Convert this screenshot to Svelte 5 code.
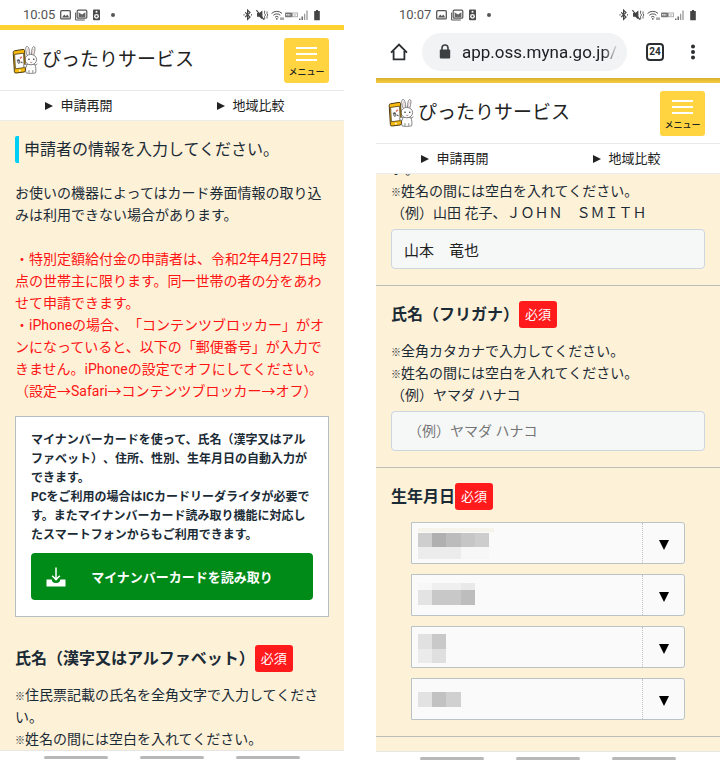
<script lang="ts">
  interface Block {
    x: number,
    y: number,
    w: number,
    h: number,
    c: string
  }

  interface BirthField {
    id: string,
    name: string,
    blocks: Array<Block>
  }

  let fullName = $state('山本　竜也');
  let kana = $state('');
  let address = $state('app.oss.myna.go.jp/A');

  // masked values, drawn over each drop-down
  const birth: Array<BirthField> = [
    {
      id: 'era',
      name: '元号',
      blocks: [
        { x: 0, y: 5, w: 76, h: 4, c: '#f6f4ea' },
        { x: 0, y: 10, w: 14, h: 14, c: '#cecece' },
        { x: 14, y: 10, w: 14, h: 14, c: '#b0b0b0' },
        { x: 28, y: 10, w: 15, h: 14, c: '#bcbcbc' },
        { x: 43, y: 10, w: 14, h: 14, c: '#c6c6c6' },
        { x: 57, y: 10, w: 14, h: 14, c: '#cdcdcd' },
        { x: 0, y: 24, w: 43, h: 12, c: '#ececec' },
        { x: 43, y: 24, w: 28, h: 12, c: '#f7f7f7' }
      ]
    },
    {
      id: 'year',
      name: '年',
      blocks: [
        { x: 0, y: 8, w: 14, h: 7, c: '#f7f7f7' },
        { x: 14, y: 8, w: 29, h: 7, c: '#efefef' },
        { x: 43, y: 8, w: 14, h: 7, c: '#e9e9e9' },
        { x: 0, y: 15, w: 14, h: 15, c: '#e3e3e3' },
        { x: 14, y: 15, w: 29, h: 15, c: '#c8c8c8' },
        { x: 43, y: 15, w: 14, h: 15, c: '#bdbdbd' }
      ]
    },
    {
      id: 'month',
      name: '月',
      blocks: [
        { x: 0, y: 7, w: 14, h: 15, c: '#e1e1e1' },
        { x: 14, y: 7, w: 14, h: 15, c: '#c9c9c9' },
        { x: 0, y: 22, w: 14, h: 14, c: '#ebebeb' },
        { x: 14, y: 22, w: 14, h: 14, c: '#dfdfdf' }
      ]
    },
    {
      id: 'day',
      name: '日',
      blocks: [
        { x: 0, y: 13, w: 14, h: 15, c: '#e2e2e2' },
        { x: 14, y: 13, w: 14, h: 15, c: '#c2c2c2' },
        { x: 28, y: 13, w: 15, h: 15, c: '#d0d0d0' }
      ]
    }
  ];
</script>

{#snippet status(time: string)}
  <div class="status">
    <span class="time">{time}</span>
    <svg class="notices" width="56" height="12" viewBox="0 0 56 12" aria-hidden="true">
      <rect x="0.7" y="1.7" width="9.6" height="8.2" rx="1" fill="none" stroke="#555" stroke-width="1.3" />
      <path d="M2 8.6 4.3 5.6 5.8 7.2 7.3 5.4 9.2 8.6z" fill="#555" />
      <path d="M15.6 3.6v7.4h9.2" fill="none" stroke="#555" stroke-width="1" />
      <rect x="17.2" y="1.2" width="9.6" height="8" rx="1" fill="none" stroke="#555" stroke-width="1.2" />
      <path d="M18.6 3.2 22 5.4 25.4 3.2V8.2H18.6z" fill="#666" />
      <rect x="33" y="0.6" width="7" height="10.6" rx="1" fill="#4c4c4c" />
      <circle cx="36.5" cy="7.3" r="2.4" fill="#fff" />
      <circle cx="36.5" cy="7.3" r="1.1" fill="#4c4c4c" />
      <circle cx="36.5" cy="2.7" r="1" fill="#fff" />
      <circle cx="53" cy="6" r="2" fill="#555" />
    </svg>
    <svg class="signals" width="80" height="12" viewBox="0 0 80 12" aria-hidden="true">
      <path d="M2.2 3.4 7 8 4.6 10.4V1.2L7 3.6 2.2 8" fill="none" stroke="#444" stroke-width="1.2" />
      <path d="M0.5 5.8h1M8 5.8h1" stroke="#444" stroke-width="1.2" />
      <path d="M14 4h2.2L19.4 1.4v9L16.2 7.8H14z" fill="#444" />
      <path d="M13.4 1.2 21 10.6" stroke="#444" stroke-width="1.1" />
      <path d="M21.6 1.6v3l1 1.4-1 1.4v3M24 2.4v2l.8 1.6-.8 1.6v2" fill="none" stroke="#555" stroke-width="0.9" />
      <path d="M28.6 4.4a7.6 7.6 0 0 1 10.4 0M30.3 6.3a5 5 0 0 1 7 0M32 8.2a2.6 2.6 0 0 1 3.6 0" fill="none" stroke="#555" stroke-width="1" />
      <circle cx="33.8" cy="9.8" r="0.9" fill="#555" />
      <path d="M38 8.4v2.6M40 8.4v2.6" stroke="#555" stroke-width="1" />
      <rect x="42" y="3.6" width="7" height="4.6" rx="0.8" fill="#777" />
      <path d="M43.4 6.8V5l1 1.2 1-1.2v1.8M46.8 5v1.8" fill="none" stroke="#fff" stroke-width="0.6" />
      <rect x="49.4" y="4" width="5" height="3.8" fill="none" stroke="#999" stroke-width="0.8" />
      <path d="M50.6 6h2.6" stroke="#999" stroke-width="0.8" />
      <path d="M56.8 9.4V11M59.2 7.4V11" stroke="#555" stroke-width="1.3" />
      <path d="M61.6 4.8V11M64 1.4V11" stroke="#999" stroke-width="1.3" />
      <path d="M73 1h2v1h1.8v9.2h-5.6V2H73z" fill="#444" />
    </svg>
  </div>
{/snippet}

{#snippet siteHeader()}
  <header class="site-header">
    <svg width="28" height="30" viewBox="0 0 28 30" aria-hidden="true">
      <!-- rabbit -->
      <path d="M15.4 10.6C13.4 6 13 1.6 15 1.4c1.8-.2 2.6 4.4 2.8 8M19.4 9.4C19.6 5 20.4 1.2 22 1.6c1.8.5.6 5.6-.4 9" fill="#fff" stroke="#777" stroke-width="0.9" />
      <path d="M15.6 3.6l.8 5M21.3 3.8l-.8 5" stroke="#d9b9b9" stroke-width="0.9" />
      <path d="M14.4 19.4c-1 3-1 6-.4 8.4 1.8.8 7.8.8 9.6 0 .6-2.4.4-5.4-.8-8.4z" fill="#fff" stroke="#777" stroke-width="0.9" />
      <ellipse cx="18.8" cy="14.6" rx="5.8" ry="5.2" fill="#fff" stroke="#777" stroke-width="0.9" />
      <circle cx="17" cy="14.2" r="0.8" fill="#333" />
      <circle cx="21.8" cy="14.2" r="0.8" fill="#333" />
      <path d="M18.3 17.2q1 .8 2 0" fill="none" stroke="#a55" stroke-width="0.8" />
      <path d="M22.8 20.4l2.6-1.6M17 27.8v-2.6M20.8 27.8v-2.6" stroke="#777" stroke-width="0.9" />
      <!-- phone -->
      <path d="M2.4 5.8 11 4.4q1.5-.2 1.6 1.2l.8 19.8q0 1.4-1.3 1.6L4 28q-1.5.1-1.6-1.2L1.2 7.4Q1.2 6 2.4 5.8z" fill="#f7bb10" stroke="#4d3a10" stroke-width="1" />
      <path d="M2.6 9.4 11.6 8.2l.6 14.4-8.8 1.2z" fill="#fff" stroke="#4d3a10" stroke-width="0.8" />
      <path d="M4.8 15.2h2.4M6.6 14.6c-1.6 2.4-.6 4 .6 3.6 1-.4.8-2-.2-3.6M8.8 17.4q1.6-1 1.4.8" fill="none" stroke="#333" stroke-width="0.9" />
      <path d="M8 13.4l1.8-1.6" stroke="#ee5b4d" stroke-width="1.4" />
      <circle cx="7.8" cy="25.6" r="0.9" fill="#fff" />
      <circle cx="13.2" cy="20.8" r="1.5" fill="#fff" stroke="#777" stroke-width="0.8" />
    </svg>
    <span class="site-name">ぴったりサービス</span>
    <button class="menu" type="button">
      <span class="menu-icon"></span>
      メニュー
    </button>
  </header>
  <nav class="site-nav">
    <a href="#resume">申請再開</a>
    <a href="#compare">地域比較</a>
  </nav>
{/snippet}

{#snippet systemKeys()}
  <footer class="keys">
    <button type="button" aria-label="履歴"></button>
    <button type="button" aria-label="ホーム"></button>
    <button type="button" aria-label="戻る"></button>
  </footer>
{/snippet}

<div class="screens">
  <section class="phone">
    {@render status('10:05')}
    <div class="accent"></div>
    {@render siteHeader()}
    <main class="content">
      <h1>申請者の情報を入力してください。</h1>
      <p>お使いの機器によってはカード券面情報の取り込みは利用できない場合があります。</p>
      <p class="notice">
        ・特別定額給付金の申請者は、令和2年4月27日時点の世帯主に限ります。同一世帯の者の分をあわせて申請できます。<br />
        ・iPhoneの場合、「コンテンツブロッカー」がオンになっていると、以下の「郵便番号」が入力できません。iPhoneの設定でオフにしてください。<br />
        （設定→Safari→コンテンツブロッカー→オフ）
      </p>
      <div class="card">
        <p>
          マイナンバーカードを使って、氏名（漢字又はアルファベット）、住所、性別、生年月日の自動入力ができます。<br />
          PCをご利用の場合はICカードリーダライタが必要です。またマイナンバーカード読み取り機能に対応したスマートフォンからもご利用できます。
        </p>
        <button class="read" type="button">
          <svg width="20" height="20" viewBox="0 0 20 20" aria-hidden="true">
            <path d="M0.5 12.5h5.3a4.2 3.6 0 0 0 8.4 0h5.3V19.5H0.5z" fill="#fff" />
            <path d="M10 0.5v12M6.2 8.8 10 12.6 13.8 8.8" fill="none" stroke="#fff" stroke-width="1.5" />
          </svg>
          <span>マイナンバーカードを読み取り</span>
        </button>
      </div>
      <h2>氏名（漢字又はアルファベット）<span class="required">必須</span></h2>
      <p class="hint">
        <span class="mark">※</span>住民票記載の氏名を全角文字で入力してください。<br />
        <span class="mark">※</span>姓名の間には空白を入れてください。
      </p>
    </main>
    {@render systemKeys()}
  </section>

  <section class="phone">
    {@render status('10:07')}
    <div class="toolbar">
      <button class="tool" type="button" aria-label="ホーム">
        <svg width="18" height="18" viewBox="0 0 18 18" aria-hidden="true">
          <path d="M1 9.6 9 1.6 17 9.6M3.6 8v8.4h10.8V8" fill="none" stroke="#2b2e31" stroke-width="1.8" />
        </svg>
      </button>
      <div class="address">
        <svg width="12" height="16" viewBox="0 0 12 16" aria-hidden="true">
          <path d="M3 7V4a3 3 0 0 1 6 0v3" fill="none" stroke="#3c4043" stroke-width="1.6" />
          <rect x="0.8" y="5.6" width="10.4" height="9" rx="1" fill="#3c4043" />
        </svg>
        <input aria-label="アドレス" bind:value={address} />
      </div>
      <button class="tool tabs" type="button">24</button>
      <button class="tool" type="button" aria-label="その他">
        <svg width="4" height="16" viewBox="0 0 4 16" aria-hidden="true">
          <circle cx="2" cy="2.4" r="2" fill="#2b2e31" />
          <circle cx="2" cy="8" r="2" fill="#2b2e31" />
          <circle cx="2" cy="13.6" r="2" fill="#2b2e31" />
        </svg>
      </button>
    </div>
    <div class="accent shaded"></div>
    {@render siteHeader()}
    <main class="scroller">
      <div class="scrolled">
        <div class="field">
          <p>
            い。<br />
            <span class="mark">※</span>姓名の間には空白を入れてください。<br />
            （例）山田 花子、ＪＯＨＮ　ＳＭＩＴＨ
          </p>
          <input class="text" aria-label="氏名" bind:value={fullName} />
        </div>
        <div class="field">
          <h2><label for="kana">氏名（フリガナ）</label><span class="required">必須</span></h2>
          <p class="hint">
            <span class="mark">※</span>全角カタカナで入力してください。<br />
            <span class="mark">※</span>姓名の間には空白を入れてください。<br />
            （例）ヤマダ ハナコ
          </p>
          <input id="kana" class="text" placeholder="（例）ヤマダ ハナコ" bind:value={kana} />
        </div>
        <div class="field">
          <h2>生年月日<span class="required">必須</span></h2>
          <div class="selects">
            {#each birth as b}
              <div class="select">
                <select id={b.id} aria-label={b.name}><option></option></select>
                <svg class="mask" width="76" height="40" viewBox="0 0 76 40" aria-hidden="true">
                  {#each b.blocks as r}
                    <rect x={r.x} y={r.y} width={r.w} height={r.h} fill={r.c} />
                  {/each}
                </svg>
              </div>
            {/each}
          </div>
        </div>
      </div>
    </main>
    {@render systemKeys()}
  </section>
</div>

<style>
  :global(body) {
    background: #fff;
  }

  .screens {
    display: grid;
    grid-template-columns: 1fr 1fr;
    gap: 32px;
    font: 14px/22px Roboto, "Noto Sans CJK JP", sans-serif;
    text-spacing-trim: space-all;
    color: #1b2b36;
  }

  .phone {
    min-width: 0;
  }

  h1, h2, p {
    margin: 0;
  }

  button, input, select {
    font-family: inherit;
    box-sizing: border-box;
    margin: 0;
  }

  button {
    border: 0;
    padding: 0;
    background: none;
    cursor: pointer;
  }

  svg {
    display: block;
    flex: none;
  }

  /* status bar */
  .status {
    display: flex;
    align-items: center;
    height: 25px;
    padding: 5px 21px 0 23px;
    box-sizing: border-box;
  }

  .time {
    font-size: 13px;
    color: #555;
  }

  .notices {
    margin-left: 5px;
  }

  .signals {
    margin-left: auto;
  }

  /* browser toolbar */
  .toolbar {
    display: flex;
    align-items: center;
    height: 53px;
    padding: 0 25px 0 14px;
  }

  .tool {
    display: flex;
    align-items: center;
    justify-content: center;
  }

  .address {
    display: flex;
    align-items: center;
    flex: 1;
    min-width: 0;
    gap: 11px;
    height: 38px;
    margin: 0 19px 0 14px;
    padding: 0 8px 0 17px;
    border-radius: 19px;
    background: #f1f3f4;
  }

  .address input {
    flex: 1;
    min-width: 0;
    border: 0;
    padding: 0;
    background: none;
    font-size: 17px;
    color: #202124;
    -webkit-mask-image: linear-gradient(to left, transparent, #000 16px);
    mask-image: linear-gradient(to left, transparent, #000 16px);
  }

  .tabs {
    width: 18px;
    height: 18px;
    margin-right: 27px;
    border: 2px solid #2b2e31;
    border-radius: 4px;
    font-size: 10px;
    font-weight: 700;
    color: #2b2e31;
  }

  /* site header */
  .accent {
    height: 5px;
    background: #ffd234;
  }

  .shaded {
    background: linear-gradient(#d9b02f, #f5cc40);
  }

  .site-header {
    display: flex;
    align-items: center;
    gap: 2px;
    height: 60px;
    padding: 0 15px 0 12px;
    border-bottom: 1px solid #e8e8e8;
  }

  .site-name {
    font-size: 19px;
    color: #222;
  }

  .menu {
    display: flex;
    flex-direction: column;
    align-items: center;
    gap: 5px;
    width: 45px;
    height: 45px;
    margin-left: auto;
    padding-top: 9px;
    border-radius: 3px;
    background: #ffd440;
    font-size: 9px;
    line-height: 12px;
    font-weight: 500;
    white-space: nowrap;
    color: #222;
  }

  .menu-icon {
    width: 21px;
    height: 14px;
    background: linear-gradient(#fff 2px, transparent 2px 6px, #fff 6px 8px, transparent 8px 12px, #fff 12px);
  }

  .site-nav {
    display: grid;
    grid-template-columns: 1fr 1fr;
    border-bottom: 1px solid #ececec;
  }

  .site-nav a {
    display: flex;
    align-items: center;
    justify-content: center;
    gap: 7px;
    height: 29px;
    padding-right: 14px;
    font-size: 13px;
    color: #222;
    text-decoration: none;
  }

  .site-nav a::before {
    content: "";
    border: solid transparent;
    border-width: 4px 0 4px 8px;
    border-left-color: #222;
  }

  /* page */
  .content {
    padding: 15px 15px 0;
    background: #fdf1d8;
  }

  h1 {
    margin-bottom: 19px;
    padding-left: 5px;
    border-left: 4px solid #00cff5;
    border-radius: 2px;
    font-size: 16px;
    line-height: 27px;
    font-weight: 400;
  }

  h2 {
    display: flex;
    align-items: center;
    font-size: 16px;
    line-height: 27px;
    font-weight: 700;
  }

  .notice {
    margin-top: 22px;
    color: #ff1414;
  }

  .card {
    margin: 14px 0 28px;
    padding: 14px 15px 16px;
    border: 1px solid #b4bfc3;
    background: #fff;
  }

  .card p {
    font-size: 12px;
    line-height: 19px;
    font-weight: 700;
  }

  .read {
    display: flex;
    align-items: center;
    width: 100%;
    height: 47px;
    margin-top: 8px;
    padding: 0 15px;
    border-radius: 4px;
    background: #008a17;
    font-size: 13px;
    font-weight: 700;
    color: #fff;
  }

  .read span {
    flex: 1;
  }

  .required {
    width: 38px;
    border-radius: 3px;
    background: #ff1a1c;
    font-size: 13px;
    font-weight: 400;
    text-align: center;
    color: #fff;
  }

  .hint {
    margin-top: 12px;
  }

  .mark {
    font-size: 10px;
    line-height: 10px;
    font-weight: 700;
  }

  /* the form, scrolled partly under the header */
  .scroller {
    overflow: hidden;
    background: #fdf1d8;
  }

  .scrolled {
    margin-top: -16px;
    padding-bottom: 14px;
  }

  .field {
    padding: 0 15px 16px;
    border-bottom: 1px solid #bdbdb8;
  }

  .field + .field {
    padding-top: 15px;
  }

  .text {
    display: block;
    width: 100%;
    height: 40px;
    margin-top: 5px;
    padding: 0 12px;
    border: 1px solid #cbd6df;
    border-radius: 4px;
    background: #f6f8f8;
    font-size: 15px;
    color: #222;
  }

  .text::placeholder {
    font-size: 14px;
    text-indent: 4px;
    color: #757575;
  }

  .selects {
    display: grid;
    gap: 10px;
    margin-top: 12px;
    padding: 0 20px;
  }

  .select {
    position: relative;
    display: flex;
    height: 42px;
    box-sizing: border-box;
    border: 1px solid #bac3c6;
    border-radius: 0 3px 3px 0;
    background: #fafafa;
  }

  .select select {
    flex: 1;
    border: 0;
    padding: 0 48px 0 8px;
    appearance: none;
    background: none;
    font-size: 15px;
  }

  .select::after {
    content: "";
    position: absolute;
    top: 17px;
    right: 15px;
    border: solid transparent;
    border-width: 10px 5px 0;
    border-top-color: #000;
    pointer-events: none;
  }

  .select::before {
    content: "";
    position: absolute;
    top: 0;
    bottom: 0;
    right: 41px;
    border-left: 1px dotted #c4c4c4;
    pointer-events: none;
  }

  .mask {
    position: absolute;
    top: 0;
    left: 6px;
    pointer-events: none;
  }

  /* system keys */
  .keys {
    display: flex;
    justify-content: center;
    gap: 32px;
    height: 13px;
    padding-top: 5px;
    box-sizing: border-box;
    border-top: 1px solid #e6e6e6;
  }

  .keys button {
    width: 64px;
    height: 3px;
    border-radius: 2px;
    background: #b8b8b8;
  }
</style>
